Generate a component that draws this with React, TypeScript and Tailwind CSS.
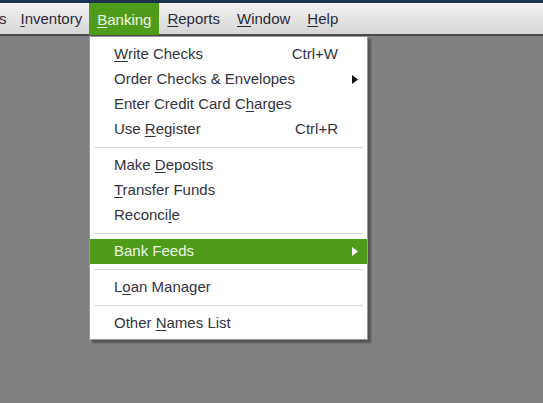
import React from 'react';

type Item =
  | { kind: 'item'; label: string; u?: number; shortcut?: string; sub?: boolean; active?: boolean }
  | { kind: 'sep' };

const items: Item[] = [
  { kind: 'item', label: 'Write Checks', u: 0, shortcut: 'Ctrl+W' },
  { kind: 'item', label: 'Order Checks & Envelopes', sub: true },
  { kind: 'item', label: 'Enter Credit Card Charges', u: 19 },
  { kind: 'item', label: 'Use Register', u: 4, shortcut: 'Ctrl+R' },
  { kind: 'sep' },
  { kind: 'item', label: 'Make Deposits', u: 5 },
  { kind: 'item', label: 'Transfer Funds', u: 0 },
  { kind: 'item', label: 'Reconcile', u: 7 },
  { kind: 'sep' },
  { kind: 'item', label: 'Bank Feeds', sub: true, active: true },
  { kind: 'sep' },
  { kind: 'item', label: 'Loan Manager', u: 1 },
  { kind: 'sep' },
  { kind: 'item', label: 'Other Names List', u: 6 },
];

const bar = [
  { label: 'Inventory', u: 0, pr: 'pr-[7px]' },
  { label: 'Banking', u: 0, active: true, pr: 'pr-[8px]' },
  { label: 'Reports', u: 0, pr: 'pr-[9px]' },
  { label: 'Window', u: 0, pr: 'pr-[9px]' },
  { label: 'Help', u: 0, pr: 'pr-[7px]' },
];

function Label({ text, u }: { text: string; u?: number }) {
  if (u === undefined) return <>{text}</>;
  return (
    <>
      {text.slice(0, u)}
      <span className="underline underline-offset-2">{text[u]}</span>
      {text.slice(u + 1)}
    </>
  );
}

function Arrow({ color }: { color: string }) {
  return (
    <svg width="6" height="9" viewBox="0 0 6 9">
      <path d="M0 0 L6 4.5 L0 9 Z" fill={color} />
    </svg>
  );
}

export default function App() {
  return (
    <div
      className="relative w-[543px] h-[403px] bg-[#808080] overflow-hidden text-[15px]"
      style={{ fontFamily: '"Liberation Sans", Arial, sans-serif' }}
    >
      <div className="h-[3px] bg-[#1c3350]" />
      {/* Menu bar */}
      <div className="h-[31px] flex items-stretch bg-gradient-to-b from-[#f2f2f2] to-[#d6d6d6] text-[#2b2b3a]">
        <div className="flex items-center pt-[2px] ml-[-1px] pr-[6px]">s</div>
        {bar.map((b) => (
          <div
            key={b.label}
            className={`flex items-center pt-[2px] pl-[8px] ${b.pr} ${
              b.active ? 'bg-[#4f9c1c] text-[#f0f6ea] h-[32px]' : ''
            }`}
          >
            <Label text={b.label} u={b.u} />
          </div>
        ))}
      </div>
      <div className="h-[2px] bg-[#4a4a4a]" />

      {/* Dropdown */}
      <div className="absolute left-[89px] top-[36px] w-[279px] bg-white border border-[#9a9a9a] pt-[5px] pb-[3px] shadow-[3px_3px_2px_rgba(0,0,0,0.35)] text-[#33333f]">
        {items.map((it, i) =>
          it.kind === 'sep' ? (
            <div key={i} className="h-[11px] flex items-center px-[4px]">
              <div className="w-full h-[2px] border-t border-[#d4d4d4] border-b border-b-white" />
            </div>
          ) : (
            <div
              key={i}
              className={`h-[25px] flex items-center pl-[24px] pr-[9px] ${
                it.active ? 'bg-[#4f9c1c] text-[#eef5e8]' : ''
              }`}
            >
              <span className="flex-1">
                <Label text={it.label} u={it.u} />
              </span>
              {it.shortcut && <span className="mr-[20px]">{it.shortcut}</span>}
              {it.sub && <Arrow color={it.active ? '#ffffff' : '#111111'} />}
            </div>
          )
        )}
      </div>
    </div>
  );
}
